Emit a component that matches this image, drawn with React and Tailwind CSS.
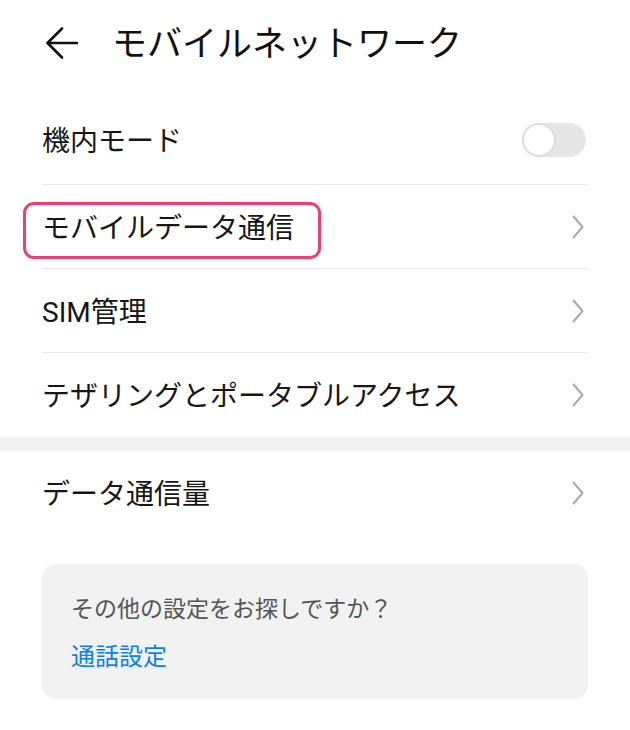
import React from 'react';

const font = { fontFamily: 'Roboto, "Noto Sans CJK JP", "Noto Sans", sans-serif' };

function Chevron() {
  return (
    <svg width="12" height="24" viewBox="0 0 12 24" fill="none">
      <path d="M1.5 1.5 L10.5 12 L1.5 22.5" stroke="#a8a8a8" strokeWidth="2" strokeLinecap="round" strokeLinejoin="round" />
    </svg>
  );
}

function Row({ label, right, border = true, height = 'h-[84px]', children }) {
  return (
    <div className={`relative flex items-center justify-between ${height} ${border ? 'border-b border-[#e8e8e8]' : ''}`}>
      {children}
      <span className="pt-[4px] text-[28px] leading-[36px] text-[#161616]">{label}</span>
      <div className="flex items-center pr-[4px]">{right}</div>
    </div>
  );
}

export default function App() {
  return (
    <div className="w-[630px] h-[730px] bg-white overflow-hidden" style={font}>
      <div className="flex items-center h-[96px] pb-[10px] pl-[46px]">
        <svg width="32" height="32" viewBox="0 0 32 32" fill="none">
          <path d="M31 16 H2 M16 1.5 L1.5 16 L16 30.5" stroke="#111" strokeWidth="2.6" strokeLinecap="round" strokeLinejoin="round" />
        </svg>
        <h1 className="ml-[34px] pt-[3px] text-[35px] leading-[44px] font-normal text-[#111]">モバイルネットワーク</h1>
      </div>

      <div className="px-[42px]">
        <Row
          label="機内モード"
          height="h-[89px]"
          right={
            <div className="w-[64px] h-[34px] rounded-full bg-[#e6e6e6] flex items-center -mr-[2px]">
              <div className="w-[34px] h-[34px] rounded-full bg-white border-2 border-[#dedede]" />
            </div>
          }
        />
        <Row label="モバイルデータ通信" right={<Chevron />}>
          <div className="absolute left-[-19px] top-[17px] w-[298px] h-[57px] rounded-[11px] border-[3px] border-[#ec3f75]" />
        </Row>
        <Row label="SIM管理" right={<Chevron />} />
        <Row label="テザリングとポータブルアクセス" right={<Chevron />} border={false} />
      </div>

      <div className="h-[14px] bg-[#f3f3f3]" />

      <div className="px-[42px]">
        <Row label="データ通信量" right={<Chevron />} border={false} />

        <div className="mt-[29px] h-[135px] rounded-[14px] bg-[#f2f2f2] pl-[29px] pt-[30px]">
          <p className="text-[23px] leading-[32px] text-[#555]">その他の設定をお探しですか？</p>
          <p className="mt-[15px] text-[24px] leading-[32px] text-[#0b7ff4]">通話設定</p>
        </div>
      </div>
    </div>
  );
}
